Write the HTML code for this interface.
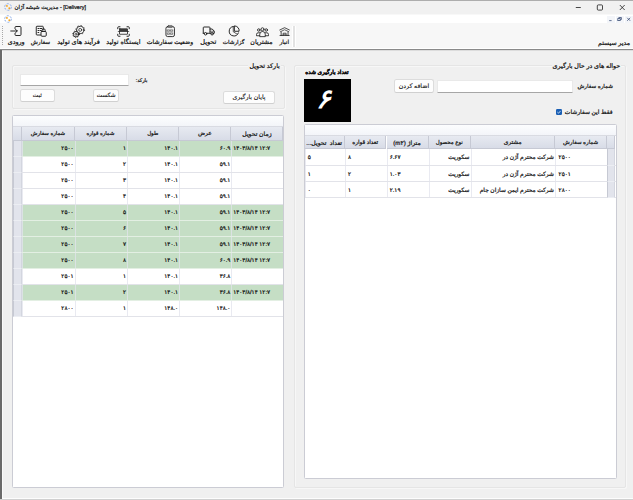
<!DOCTYPE html>
<html lang="fa">
<head>
<meta charset="utf-8">
<title>Delivery</title>
<style>
html,body{margin:0;padding:0;}
body{text-rendering:geometricPrecision;width:633px;height:500px;overflow:hidden;position:relative;background:#f0f0f0;font-family:"Liberation Sans",sans-serif;font-size:6px;color:#111;-webkit-text-stroke:0.22px #111;}
.abs{position:absolute;}
.t{position:absolute;white-space:nowrap;line-height:10px;height:10px;}
.r{direction:rtl;text-align:right;}
.c{text-align:center;direction:rtl;}
.l{direction:ltr;text-align:left;}
#titlebar{left:0;top:0;width:633px;height:15.4px;background:#f1f1f1;border-top:1px solid #adadad;border-bottom:1px solid #f8f8f8;box-sizing:border-box;}
#menubar{left:0;top:15.4px;width:633px;height:7.8px;background:#fff;}
#toolbar{left:0;top:23.2px;width:633px;height:25.8px;background:#f7f7f7;border-bottom:1.2px solid #fff;box-sizing:border-box;}
#tbline{left:0;top:49px;width:633px;height:1.3px;background:#8a8a8a;}
#tbline2{left:0;top:50.3px;width:633px;height:0.7px;background:#dcdcdc;}
#leftedge{left:0;top:50px;width:1.6px;height:450px;background:#6a6a6a;}
#leftedge2{left:1.6px;top:51px;width:1.2px;height:449px;background:#fafafa;}
#bottomline{left:2px;top:498px;width:631px;height:1px;background:#fdfdfd;}
#bottomline2{left:0;top:499px;width:633px;height:1px;background:#d0d0d0;}
.tbl{font-size:6.2px;}
.ico{position:absolute;overflow:visible;}
.gb{position:absolute;border:1px solid #e5e5e5;box-sizing:border-box;border-radius:2px;box-shadow:inset 1px 1px 0 #f7f7f7,1px 1px 0 #f7f7f7;}
.inp{position:absolute;background:#fff;border:1px solid #e9e9e9;border-bottom:1px solid #a6a6a6;box-sizing:border-box;border-radius:1px;}
.btn{position:absolute;background:#fdfdfd;border:1px solid #dcdcdc;border-bottom-color:#d0d0d0;box-sizing:border-box;border-radius:2.5px;text-align:center;direction:rtl;white-space:nowrap;-webkit-text-stroke-width:0.12px;}
.grid{position:absolute;background:#fff;border:1px solid #cbccd4;border-radius:1.5px;box-sizing:border-box;overflow:hidden;}
.gp{position:absolute;left:0;top:0;right:0;background:linear-gradient(#fcfdfe,#f3f5f9);border-bottom:1px solid #d9dbe2;box-sizing:border-box;}
.hd{position:absolute;background:linear-gradient(#e7eaf1,#d8dce7);border-right:1px solid #c6c9d4;border-bottom:1px solid #c6c9d4;box-sizing:border-box;text-align:center;direction:rtl;white-space:nowrap;overflow:hidden;}
.row{position:absolute;left:0;right:0;border-bottom:1px solid #e2e3e9;box-sizing:border-box;}
.g{background:#c5dec5;border-bottom-color:#e3efe3;}
.ind{position:absolute;background:#e2e4ec;border-bottom:1px solid #eceef3;border-left:1px solid #c6c9d3;border-right:1px solid #d3d6df;box-sizing:border-box;}
.cell{font-size:5.7px;direction:ltr;position:absolute;top:0;bottom:0;white-space:nowrap;overflow:hidden;box-sizing:border-box;border-left:1px solid rgba(226,227,236,0.75);}
</style>
</head>
<body>
<div id="titlebar" class="abs"></div><div id="menubar" class="abs"></div><div id="toolbar" class="abs"></div>
<div id="tbline" class="abs"></div><div id="tbline2" class="abs"></div><div id="leftedge" class="abs"></div><div id="leftedge2" class="abs"></div>
<div id="bottomline" class="abs"></div><div id="bottomline2" class="abs"></div>
<svg class="ico" style="left:4px;top:3px" width="8" height="8" viewBox="0 0 16 16"><circle cx="8" cy="8" r="6.600" fill="none" stroke="#86a8e6" stroke-width="1.900" stroke-dasharray="4.400 2.510"/><circle cx="5.800" cy="5.800" r="1.900" fill="#f7a51c"/><circle cx="10.600" cy="10.400" r="1.900" fill="#f7a51c"/></svg>
<div class="t l" id="title" style="left:14.5px;top:2.5px;font-size:5.46px;">مدیریت شیشه آژان - [Delivery]</div>
<svg class="ico" style="left:573px;top:3px" width="54" height="9" viewBox="0 0 54 9"><g fill="none" stroke="#1c1c1c" stroke-width="0.800"><path d="M2.800 4.500h5"/><rect x="24.300" y="1.900" width="5.200" height="5.200" rx="1"/><path d="M46.800 2l4.900 5M51.700 2l-4.900 5"/></g></svg>
<svg class="ico" style="left:4px;top:15px" width="8" height="8" viewBox="0 0 16 16"><circle cx="8" cy="8" r="6.600" fill="none" stroke="#86a8e6" stroke-width="1.900" stroke-dasharray="4.400 2.510"/><circle cx="5.800" cy="5.800" r="1.900" fill="#f7a51c"/><circle cx="10.600" cy="10.400" r="1.900" fill="#f7a51c"/></svg>
<div class="abs" style="left:607px;top:15.5px;width:7.5px;height:7px;background:#f3f5f9"></div>
<div class="abs" style="left:616px;top:15.5px;width:7.5px;height:7px;background:#f3f5f9"></div>
<div class="abs" style="left:625px;top:15.5px;width:7.5px;height:7px;background:#f3f5f9"></div>
<svg class="ico" style="left:607px;top:15px" width="26" height="8" viewBox="0 0 26 8"><g fill="none" stroke="#3d5078" stroke-width="0.800"><path d="M2.200 5.600h2.400"/><rect x="10.800" y="3.600" width="2.400" height="2"/><path d="M11.800 3.400v-0.900h2.600v2h-1"/><path d="M20.200 2.800l3 3M23.200 2.800l-3 3"/></g></svg>
<div class="abs" style="left:2px;top:26px;width:1px;height:19px;background:repeating-linear-gradient(#a8a8a8 0 1px,#f7f7f7 1px 2px)"></div>
<div class="t c tbl" id="tl0" style="left:-13.8px;width:60px;top:38.4px;font-size:6.35px">ورودی</div>
<div class="t c tbl" id="tl1" style="left:10.5px;width:60px;top:38.4px;font-size:5.8px">سفارش</div>
<div class="t c tbl" id="tl2" style="left:48.5px;width:60px;top:38.4px;font-size:6.55px">فرآیند های تولید</div>
<div class="t c tbl" id="tl3" style="left:93.4px;width:60px;top:38.4px;font-size:6.4px">ایستگاه تولید</div>
<div class="t c tbl" id="tl4" style="left:140.0px;width:60px;top:38.4px;font-size:6.1px">وضعیت سفارشات</div>
<div class="t c tbl" id="tl5" style="left:178.3px;width:60px;top:38.4px;font-size:6.55px">تحویل</div>
<div class="t c tbl" id="tl6" style="left:203.6px;width:60px;top:38.4px;font-size:5.6px">گزارشات</div>
<div class="t c tbl" id="tl7" style="left:231.5px;width:60px;top:38.4px;font-size:6.2px">مشتریان</div>
<div class="t c tbl" id="tl8" style="left:254.3px;width:60px;top:38.4px;font-size:5.8px">انبار</div>
<div class="abs" style="left:292.3px;top:26px;width:1.9px;height:20.5px;background:#e3e3e3;border-left:0.8px solid #fff;border-right:0.8px solid #fff"></div>
<div class="t r" id="sysadm" style="left:560px;width:70px;top:38.5px;font-size:6.2px;">مدیر سیستم</div>
<svg class="ico" style="left:10.40px;top:25.40px" width="12" height="12" viewBox="0 0 24 24"><g fill="none" stroke="#1e1e1e" stroke-width="1.9" stroke-linecap="round" stroke-linejoin="round"><path d="M10 7V5a2 2 0 0 1 2-2h8a2 2 0 0 1 2 2v14a2 2 0 0 1-2 2h-8a2 2 0 0 1-2-2v-2"/><path d="M1.500 12h13M11 8.500L14.500 12l-3.500 3.500"/></g></svg>
<svg class="ico" style="left:35.10px;top:25.40px" width="12" height="12" viewBox="0 0 24 24"><g fill="none" stroke="#1e1e1e" stroke-width="1.9" stroke-linecap="round" stroke-linejoin="round"><path d="M11 20H4a1.500 1.500 0 0 1-1.500-1.500V4A1.500 1.500 0 0 1 4 2.500h11A1.500 1.500 0 0 1 16.500 4v6"/><path d="M6 7h1.500M10 7h3.500M6 11h1.500M10 11h2.500M6 15h1.500"/><rect x="12" y="13" width="10.500" height="9.500" rx="2" fill="#f7f7f7"/><path d="M14.300 13v-2.500a3 3 0 0 1 6 0V13"/></g></svg>
<svg class="ico" style="left:72.30px;top:24.50px" width="13" height="13" viewBox="0 0 26 26"><g fill="none" stroke="#1e1e1e" stroke-width="1.5" stroke-linecap="round" stroke-linejoin="round"><circle cx="16.400" cy="9.800" r="8.800" stroke-width="1.700" stroke-dasharray="2.200 4.711" stroke-linecap="butt"/><circle cx="16.400" cy="9.800" r="7.400" stroke-width="1.800" fill="#f4f4f4"/><circle cx="16.400" cy="9.800" r="3" stroke-width="1.400"/><circle cx="8" cy="18.400" r="6.800" stroke-width="1.500" stroke-dasharray="1.900 3.441" stroke-linecap="butt"/><circle cx="8" cy="18.400" r="5.500" stroke-width="1.800" fill="#f4f4f4"/><circle cx="8" cy="18.400" r="2.100" stroke-width="1.300"/></g></svg>
<svg class="ico" style="left:117.20px;top:25.60px" width="13" height="11" viewBox="0 0 26 22"><g fill="none" stroke="#1e1e1e" stroke-width="1.9" stroke-linecap="round" stroke-linejoin="round"><path d="M1.500 5.500V3a1.500 1.500 0 0 1 1.500-1.500h3M20 1.500h3A1.500 1.500 0 0 1 24.500 3v2.500M24.500 16.500v2.500a1.500 1.500 0 0 1-1.500 1.500h-3M6 20.500H3A1.500 1.500 0 0 1 1.500 19v-2.500"/><rect x="5" y="5.500" width="16" height="11" rx="0.500" stroke-width="1.600"/><rect x="5.500" y="6" width="15" height="5" fill="#3a3a3a" stroke="none"/><path d="M2.500 11h21" stroke-width="1.300"/></g></svg>
<svg class="ico" style="left:165.40px;top:25.05px" width="10.4" height="12.3" viewBox="0 0 22 26"><g fill="none" stroke="#1e1e1e" stroke-width="1.9" stroke-linecap="round" stroke-linejoin="round"><rect x="2" y="3.500" width="18" height="21" rx="3.500"/><rect x="6.500" y="1" width="9" height="4.400" rx="1" fill="#777" stroke="#444" stroke-width="1"/><g stroke-width="1.100" stroke="#2a2a2a"><rect x="5.600" y="10.200" width="3.800" height="3"/><rect x="12.600" y="10.200" width="3.800" height="3"/><rect x="5.600" y="16.800" width="3.800" height="3"/><rect x="12.600" y="16.800" width="3.800" height="3"/></g><path d="M11 9v12M5 15h12" stroke-width="0.700" stroke="#888"/></g></svg>
<svg class="ico" style="left:202.20px;top:26.20px" width="13" height="10" viewBox="0 0 26 20"><g fill="none" stroke="#1e1e1e" stroke-width="1.9" stroke-linecap="round" stroke-linejoin="round"><path d="M2.500 14.500V3.500a1.500 1.500 0 0 1 1.500-1.500h10.500a1.500 1.500 0 0 1 1.500 1.500v11"/><path d="M16 6h4.500l4 4.500v4h-2"/><path d="M2.500 14.500h2M10 14.500h8"/><circle cx="7.200" cy="15.500" r="2.500"/><circle cx="20.200" cy="15.500" r="2.500"/><path d="M16 10.500h8" stroke-width="1.200"/></g></svg>
<svg class="ico" style="left:228.30px;top:25.10px" width="12" height="12" viewBox="0 0 24 24"><g fill="none" stroke="#1e1e1e" stroke-width="1.9" stroke-linecap="round" stroke-linejoin="round"><path d="M10.500 3a9.500 9.500 0 1 0 10.300 12.800"/><path d="M13.500 1.800a9 9 0 0 1 8.600 10.700H13.500z"/><path d="M10.500 3v10.500l8 5" stroke-width="1.400"/></g></svg>
<svg class="ico" style="left:255.50px;top:26.50px" width="13" height="10" viewBox="0 0 26 20"><g fill="none" stroke="#1e1e1e" stroke-width="1.7" stroke-linecap="round" stroke-linejoin="round"><circle cx="13" cy="4.500" r="3"/><circle cx="5.500" cy="6" r="2.500"/><circle cx="20.500" cy="6" r="2.500"/><path d="M7.500 18.500v-4a5.500 5.500 0 0 1 11 0v4z"/><path d="M7 11.500H4.500A3.500 3.500 0 0 0 1 15v2.500h6M19 11.500h2.500A3.500 3.500 0 0 1 25 15v2.500h-6"/></g></svg>
<svg class="ico" style="left:278.80px;top:27.10px" width="11.2" height="9.2" viewBox="0 0 24 20"><g fill="none" stroke="#1e1e1e" stroke-width="1.7" stroke-linecap="round" stroke-linejoin="round"><path d="M1.500 6.500L12 1.500l10.500 5"/><path d="M3 10.200L12 6l9 4.200" stroke-width="1.500"/><path d="M4.500 11v7.500M19.500 11v7.500M2 18.500h20"/><path d="M8.800 18.500v-5h6.400v5M8.800 15.800h6.400" stroke-width="1.400"/></g></svg>
<div class="gb" style="left:11.7px;top:64.8px;width:273.3px;height:44.5px"></div>
<div class="t r" id="gl1" style="right:352.2px;top:62px;font-size:6.3px;background:#f0f0f0;padding:0 1px">بارکد تحویل</div>
<div class="inp" style="left:20px;top:73.8px;width:108.5px;height:12.5px"></div>
<div class="t r" id="bl" style="left:100px;width:47.5px;top:75.5px;font-size:5px">بارکد:</div>
<div class="btn" id="b1" style="left:20px;top:89px;width:34.6px;height:13.3px;font-size:5.8px;line-height:13.4px">ثبت</div>
<div class="btn" id="b2" style="left:93.2px;top:89px;width:26px;height:13.3px;font-size:5.8px;line-height:13.4px">شکست</div>
<div class="btn" id="b3" style="left:222.6px;top:90.6px;width:52.8px;height:13.8px;font-size:6.2px;line-height:12.8px">پایان بارگیری</div>
<div class="gb" style="left:294.2px;top:64.8px;width:331.8px;height:423.2px"></div>
<div class="t r" id="gl2" style="right:11.8px;top:61.9px;font-size:6.3px;background:#f0f0f0;padding:0 1px">حواله های در حال بارگیری</div>
<div class="t c" id="cntl" style="left:297px;width:60px;top:67.7px;font-size:5.7px;font-weight:bold;color:#000">تعداد بارگیری شده</div>
<div class="abs" style="left:303.5px;top:78.5px;width:47.5px;height:43px;background:#000"></div>
<div class="t c" id="six" style="left:299.7px;width:47.5px;top:82.7px;height:32px;line-height:32px;font-size:27px;font-weight:bold;font-style:italic;color:#fff;-webkit-text-stroke:0">۶</div>
<div class="btn" id="b4" style="left:394.2px;top:79.2px;width:39.6px;height:13.8px;font-size:6.2px;line-height:13px">اضافه کردن</div>
<div class="inp" style="left:437px;top:79.5px;width:136px;height:13px"></div>
<div class="t r" id="ol" style="left:560px;width:53px;top:82.3px;font-size:5.6px">شماره سفارش</div>
<div class="abs" style="left:556px;top:109px;width:6px;height:6px;background:#1a5fb4;border-radius:1.200px"></div>
<svg class="ico" style="left:556px;top:109px" width="6" height="6" viewBox="0 0 12 12"><path d="M2.800 6.200l2.200 2.200 4.200-4.600" fill="none" stroke="#fff" stroke-width="1.500"/></svg>
<div class="t r" id="cl" style="left:540px;width:72.5px;top:108px;font-size:5.94px">فقط این سفارشات</div>
<div class="grid" style="left:12.1px;top:115.0px;width:272.4px;height:373px">
<div class="gp" style="height:11.0px"></div>
<div class="hd" style="left:0;top:11.0px;width:9.2px;height:13.7px"></div>
<div class="hd" id="lh0" style="left:9.2px;top:11.0px;width:52.4px;height:13.7px;line-height:15.9px;font-size:5.42px">شماره سفارش</div>
<div class="hd" id="lh1" style="left:61.6px;top:11.0px;width:52.5px;height:13.7px;line-height:15.9px;font-size:5.25px">شماره قواره</div>
<div class="hd" id="lh2" style="left:114.1px;top:11.0px;width:52.0px;height:13.7px;line-height:15.9px;font-size:5.45px">طول</div>
<div class="hd" id="lh3" style="left:166.1px;top:11.0px;width:52.3px;height:13.7px;line-height:15.9px;font-size:5.9px">عرض</div>
<div class="hd" id="lh4" style="left:218.4px;top:11.0px;width:52.0px;height:13.7px;line-height:15.9px;font-size:6.1px">زمان تحویل</div>
<div class="row g" style="top:24.7px;height:16.03px;line-height:17.13px"><div class="ind" style="left:0;top:0;width:9.2px;height:16.03px"></div><div class="cell" id="lc0_0" style="left:9.2px;width:52.4px;text-align:right;padding-right:1.1px">۲۵۰۰</div><div class="cell" id="lc0_1" style="left:61.6px;width:52.5px;text-align:right;padding-right:1.1px">۱</div><div class="cell" id="lc0_2" style="left:114.1px;width:52.0px;text-align:right;padding-right:1.1px">۱۴۰.۱</div><div class="cell" id="lc0_3" style="left:166.1px;width:52.3px;text-align:right;padding-right:1.1px">۶۰.۹</div><div class="cell" id="lc0_4" style="left:218.4px;width:52.0px;text-align:left;padding-left:0.7px">۱۴۰۳/۸/۱۴ ۱۲:۷</div></div>
<div class="row" style="top:40.73px;height:16.03px;line-height:17.13px"><div class="ind" style="left:0;top:0;width:9.2px;height:16.03px"></div><div class="cell" id="lc1_0" style="left:9.2px;width:52.4px;text-align:right;padding-right:1.1px">۲۵۰۰</div><div class="cell" id="lc1_1" style="left:61.6px;width:52.5px;text-align:right;padding-right:1.1px">۲</div><div class="cell" id="lc1_2" style="left:114.1px;width:52.0px;text-align:right;padding-right:1.1px">۱۴۰.۱</div><div class="cell" id="lc1_3" style="left:166.1px;width:52.3px;text-align:right;padding-right:1.1px">۵۹.۱</div><div class="cell" id="lc1_4" style="left:218.4px;width:52.0px;text-align:left;padding-left:0.7px"></div></div>
<div class="row" style="top:56.76px;height:16.03px;line-height:17.13px"><div class="ind" style="left:0;top:0;width:9.2px;height:16.03px"></div><div class="cell" id="lc2_0" style="left:9.2px;width:52.4px;text-align:right;padding-right:1.1px">۲۵۰۰</div><div class="cell" id="lc2_1" style="left:61.6px;width:52.5px;text-align:right;padding-right:1.1px">۳</div><div class="cell" id="lc2_2" style="left:114.1px;width:52.0px;text-align:right;padding-right:1.1px">۱۴۰.۱</div><div class="cell" id="lc2_3" style="left:166.1px;width:52.3px;text-align:right;padding-right:1.1px">۵۹.۱</div><div class="cell" id="lc2_4" style="left:218.4px;width:52.0px;text-align:left;padding-left:0.7px"></div></div>
<div class="row" style="top:72.79px;height:16.03px;line-height:17.13px"><div class="ind" style="left:0;top:0;width:9.2px;height:16.03px"></div><div class="cell" id="lc3_0" style="left:9.2px;width:52.4px;text-align:right;padding-right:1.1px">۲۵۰۰</div><div class="cell" id="lc3_1" style="left:61.6px;width:52.5px;text-align:right;padding-right:1.1px">۴</div><div class="cell" id="lc3_2" style="left:114.1px;width:52.0px;text-align:right;padding-right:1.1px">۱۴۰.۱</div><div class="cell" id="lc3_3" style="left:166.1px;width:52.3px;text-align:right;padding-right:1.1px">۵۹.۱</div><div class="cell" id="lc3_4" style="left:218.4px;width:52.0px;text-align:left;padding-left:0.7px"></div></div>
<div class="row g" style="top:88.82px;height:16.03px;line-height:17.13px"><div class="ind" style="left:0;top:0;width:9.2px;height:16.03px"></div><div class="cell" id="lc4_0" style="left:9.2px;width:52.4px;text-align:right;padding-right:1.1px">۲۵۰۰</div><div class="cell" id="lc4_1" style="left:61.6px;width:52.5px;text-align:right;padding-right:1.1px">۵</div><div class="cell" id="lc4_2" style="left:114.1px;width:52.0px;text-align:right;padding-right:1.1px">۱۴۰.۱</div><div class="cell" id="lc4_3" style="left:166.1px;width:52.3px;text-align:right;padding-right:1.1px">۵۹.۱</div><div class="cell" id="lc4_4" style="left:218.4px;width:52.0px;text-align:left;padding-left:0.7px">۱۴۰۳/۸/۱۴ ۱۲:۷</div></div>
<div class="row g" style="top:104.85px;height:16.03px;line-height:17.13px"><div class="ind" style="left:0;top:0;width:9.2px;height:16.03px"></div><div class="cell" id="lc5_0" style="left:9.2px;width:52.4px;text-align:right;padding-right:1.1px">۲۵۰۰</div><div class="cell" id="lc5_1" style="left:61.6px;width:52.5px;text-align:right;padding-right:1.1px">۶</div><div class="cell" id="lc5_2" style="left:114.1px;width:52.0px;text-align:right;padding-right:1.1px">۱۴۰.۱</div><div class="cell" id="lc5_3" style="left:166.1px;width:52.3px;text-align:right;padding-right:1.1px">۵۹.۱</div><div class="cell" id="lc5_4" style="left:218.4px;width:52.0px;text-align:left;padding-left:0.7px">۱۴۰۳/۸/۱۴ ۱۲:۷</div></div>
<div class="row g" style="top:120.88px;height:16.03px;line-height:17.13px"><div class="ind" style="left:0;top:0;width:9.2px;height:16.03px"></div><div class="cell" id="lc6_0" style="left:9.2px;width:52.4px;text-align:right;padding-right:1.1px">۲۵۰۰</div><div class="cell" id="lc6_1" style="left:61.6px;width:52.5px;text-align:right;padding-right:1.1px">۷</div><div class="cell" id="lc6_2" style="left:114.1px;width:52.0px;text-align:right;padding-right:1.1px">۱۴۰.۱</div><div class="cell" id="lc6_3" style="left:166.1px;width:52.3px;text-align:right;padding-right:1.1px">۵۹.۱</div><div class="cell" id="lc6_4" style="left:218.4px;width:52.0px;text-align:left;padding-left:0.7px">۱۴۰۳/۸/۱۴ ۱۲:۷</div></div>
<div class="row g" style="top:136.91px;height:16.03px;line-height:17.13px"><div class="ind" style="left:0;top:0;width:9.2px;height:16.03px"></div><div class="cell" id="lc7_0" style="left:9.2px;width:52.4px;text-align:right;padding-right:1.1px">۲۵۰۰</div><div class="cell" id="lc7_1" style="left:61.6px;width:52.5px;text-align:right;padding-right:1.1px">۸</div><div class="cell" id="lc7_2" style="left:114.1px;width:52.0px;text-align:right;padding-right:1.1px">۱۴۰.۱</div><div class="cell" id="lc7_3" style="left:166.1px;width:52.3px;text-align:right;padding-right:1.1px">۶۰.۹</div><div class="cell" id="lc7_4" style="left:218.4px;width:52.0px;text-align:left;padding-left:0.7px">۱۴۰۳/۸/۱۴ ۱۲:۷</div></div>
<div class="row" style="top:152.94px;height:16.03px;line-height:17.13px"><div class="ind" style="left:0;top:0;width:9.2px;height:16.03px"></div><div class="cell" id="lc8_0" style="left:9.2px;width:52.4px;text-align:right;padding-right:1.1px">۲۵۰۱</div><div class="cell" id="lc8_1" style="left:61.6px;width:52.5px;text-align:right;padding-right:1.1px">۱</div><div class="cell" id="lc8_2" style="left:114.1px;width:52.0px;text-align:right;padding-right:1.1px">۱۴۰.۱</div><div class="cell" id="lc8_3" style="left:166.1px;width:52.3px;text-align:right;padding-right:1.1px">۳۶.۸</div><div class="cell" id="lc8_4" style="left:218.4px;width:52.0px;text-align:left;padding-left:0.7px"></div></div>
<div class="row g" style="top:168.97px;height:16.03px;line-height:17.13px"><div class="ind" style="left:0;top:0;width:9.2px;height:16.03px"></div><div class="cell" id="lc9_0" style="left:9.2px;width:52.4px;text-align:right;padding-right:1.1px">۲۵۰۱</div><div class="cell" id="lc9_1" style="left:61.6px;width:52.5px;text-align:right;padding-right:1.1px">۲</div><div class="cell" id="lc9_2" style="left:114.1px;width:52.0px;text-align:right;padding-right:1.1px">۱۴۰.۱</div><div class="cell" id="lc9_3" style="left:166.1px;width:52.3px;text-align:right;padding-right:1.1px">۳۶.۸</div><div class="cell" id="lc9_4" style="left:218.4px;width:52.0px;text-align:left;padding-left:0.7px">۱۴۰۳/۸/۱۴ ۱۲:۷</div></div>
<div class="row" style="top:185.0px;height:16.03px;line-height:17.13px"><div class="ind" style="left:0;top:0;width:9.2px;height:16.03px"></div><div class="cell" id="lc10_0" style="left:9.2px;width:52.4px;text-align:right;padding-right:1.1px">۲۸۰۰</div><div class="cell" id="lc10_1" style="left:61.6px;width:52.5px;text-align:right;padding-right:1.1px">۱</div><div class="cell" id="lc10_2" style="left:114.1px;width:52.0px;text-align:right;padding-right:1.1px">۱۴۸.۰</div><div class="cell" id="lc10_3" style="left:166.1px;width:52.3px;text-align:right;padding-right:1.1px">۱۴۸.۰</div><div class="cell" id="lc10_4" style="left:218.4px;width:52.0px;text-align:left;padding-left:0.7px"></div></div>
</div>
<div class="grid" style="left:303.5px;top:124.3px;width:313px;height:354.6px">
<div class="gp" style="height:10.4px"></div>
<div class="hd" style="left:302.4px;top:10.4px;width:8.6px;height:13.8px"></div>
<div class="hd" id="rh0" style="left:0.0px;top:10.4px;width:40.3px;height:13.8px;line-height:15.2px;font-size:6.1px">تعداد&nbsp; تحویل...</div>
<div class="hd" id="rh1" style="left:40.3px;top:10.4px;width:41.7px;height:13.8px;line-height:15.2px;font-size:5.7px">تعداد قواره</div>
<div class="hd" id="rh2" style="left:82.0px;top:10.4px;width:42.0px;height:13.8px;line-height:15.2px;font-size:6.15px">متراژ (m۲)</div>
<div class="hd" id="rh3" style="left:124.0px;top:10.4px;width:42.5px;height:13.8px;line-height:15.2px;font-size:5.45px">نوع محصول</div>
<div class="hd" id="rh4" style="left:166.5px;top:10.4px;width:84.4px;height:13.8px;line-height:15.2px;font-size:5.86px">مشتری</div>
<div class="hd" id="rh5" style="left:250.9px;top:10.4px;width:51.5px;height:13.8px;line-height:15.2px;font-size:5.53px">شماره سفارش</div>
<div class="row" style="top:24.2px;height:16.1px;line-height:18.4px"><div class="ind" style="left:302.4px;top:0;width:8.6px;height:16.1px"></div><div class="cell" id="rc0_0" style="left:0.0px;width:40.3px;text-align:left;padding-left:2.2px">۵</div><div class="cell" id="rc0_1" style="left:40.3px;width:41.7px;text-align:left;padding-left:2.2px">۸</div><div class="cell" id="rc0_2" style="left:82.0px;width:42.0px;text-align:left;padding-left:2.2px">۶.۶۷</div><div class="cell" id="rc0_3" style="left:124.0px;width:42.5px;text-align:right;padding-right:1.5px;direction:rtl;font-size:5.85px">سکوریت</div><div class="cell" id="rc0_4" style="left:166.5px;width:84.4px;text-align:right;padding-right:1.5px;direction:rtl;font-size:5.85px">شرکت محترم آژن در</div><div class="cell" id="rc0_5" style="left:250.9px;width:51.5px;text-align:left;padding-left:2.2px">۲۵۰۰</div></div>
<div class="row" style="top:40.3px;height:16.1px;line-height:18.4px"><div class="ind" style="left:302.4px;top:0;width:8.6px;height:16.1px"></div><div class="cell" id="rc1_0" style="left:0.0px;width:40.3px;text-align:left;padding-left:2.2px">۱</div><div class="cell" id="rc1_1" style="left:40.3px;width:41.7px;text-align:left;padding-left:2.2px">۲</div><div class="cell" id="rc1_2" style="left:82.0px;width:42.0px;text-align:left;padding-left:2.2px">۱.۰۳</div><div class="cell" id="rc1_3" style="left:124.0px;width:42.5px;text-align:right;padding-right:1.5px;direction:rtl;font-size:5.85px">سکوریت</div><div class="cell" id="rc1_4" style="left:166.5px;width:84.4px;text-align:right;padding-right:1.5px;direction:rtl;font-size:5.85px">شرکت محترم آژن در</div><div class="cell" id="rc1_5" style="left:250.9px;width:51.5px;text-align:left;padding-left:2.2px">۲۵۰۱</div></div>
<div class="row" style="top:56.4px;height:16.1px;line-height:18.4px"><div class="ind" style="left:302.4px;top:0;width:8.6px;height:16.1px"></div><div class="cell" id="rc2_0" style="left:0.0px;width:40.3px;text-align:left;padding-left:2.2px">۰</div><div class="cell" id="rc2_1" style="left:40.3px;width:41.7px;text-align:left;padding-left:2.2px">۱</div><div class="cell" id="rc2_2" style="left:82.0px;width:42.0px;text-align:left;padding-left:2.2px">۲.۱۹</div><div class="cell" id="rc2_3" style="left:124.0px;width:42.5px;text-align:right;padding-right:1.5px;direction:rtl;font-size:5.85px">سکوریت</div><div class="cell" id="rc2_4" style="left:166.5px;width:84.4px;text-align:right;padding-right:1.5px;direction:rtl;font-size:5.85px">شرکت محترم ایمن سازان جام</div><div class="cell" id="rc2_5" style="left:250.9px;width:51.5px;text-align:left;padding-left:2.2px">۲۸۰۰</div></div>
</div>
</body>
</html>
